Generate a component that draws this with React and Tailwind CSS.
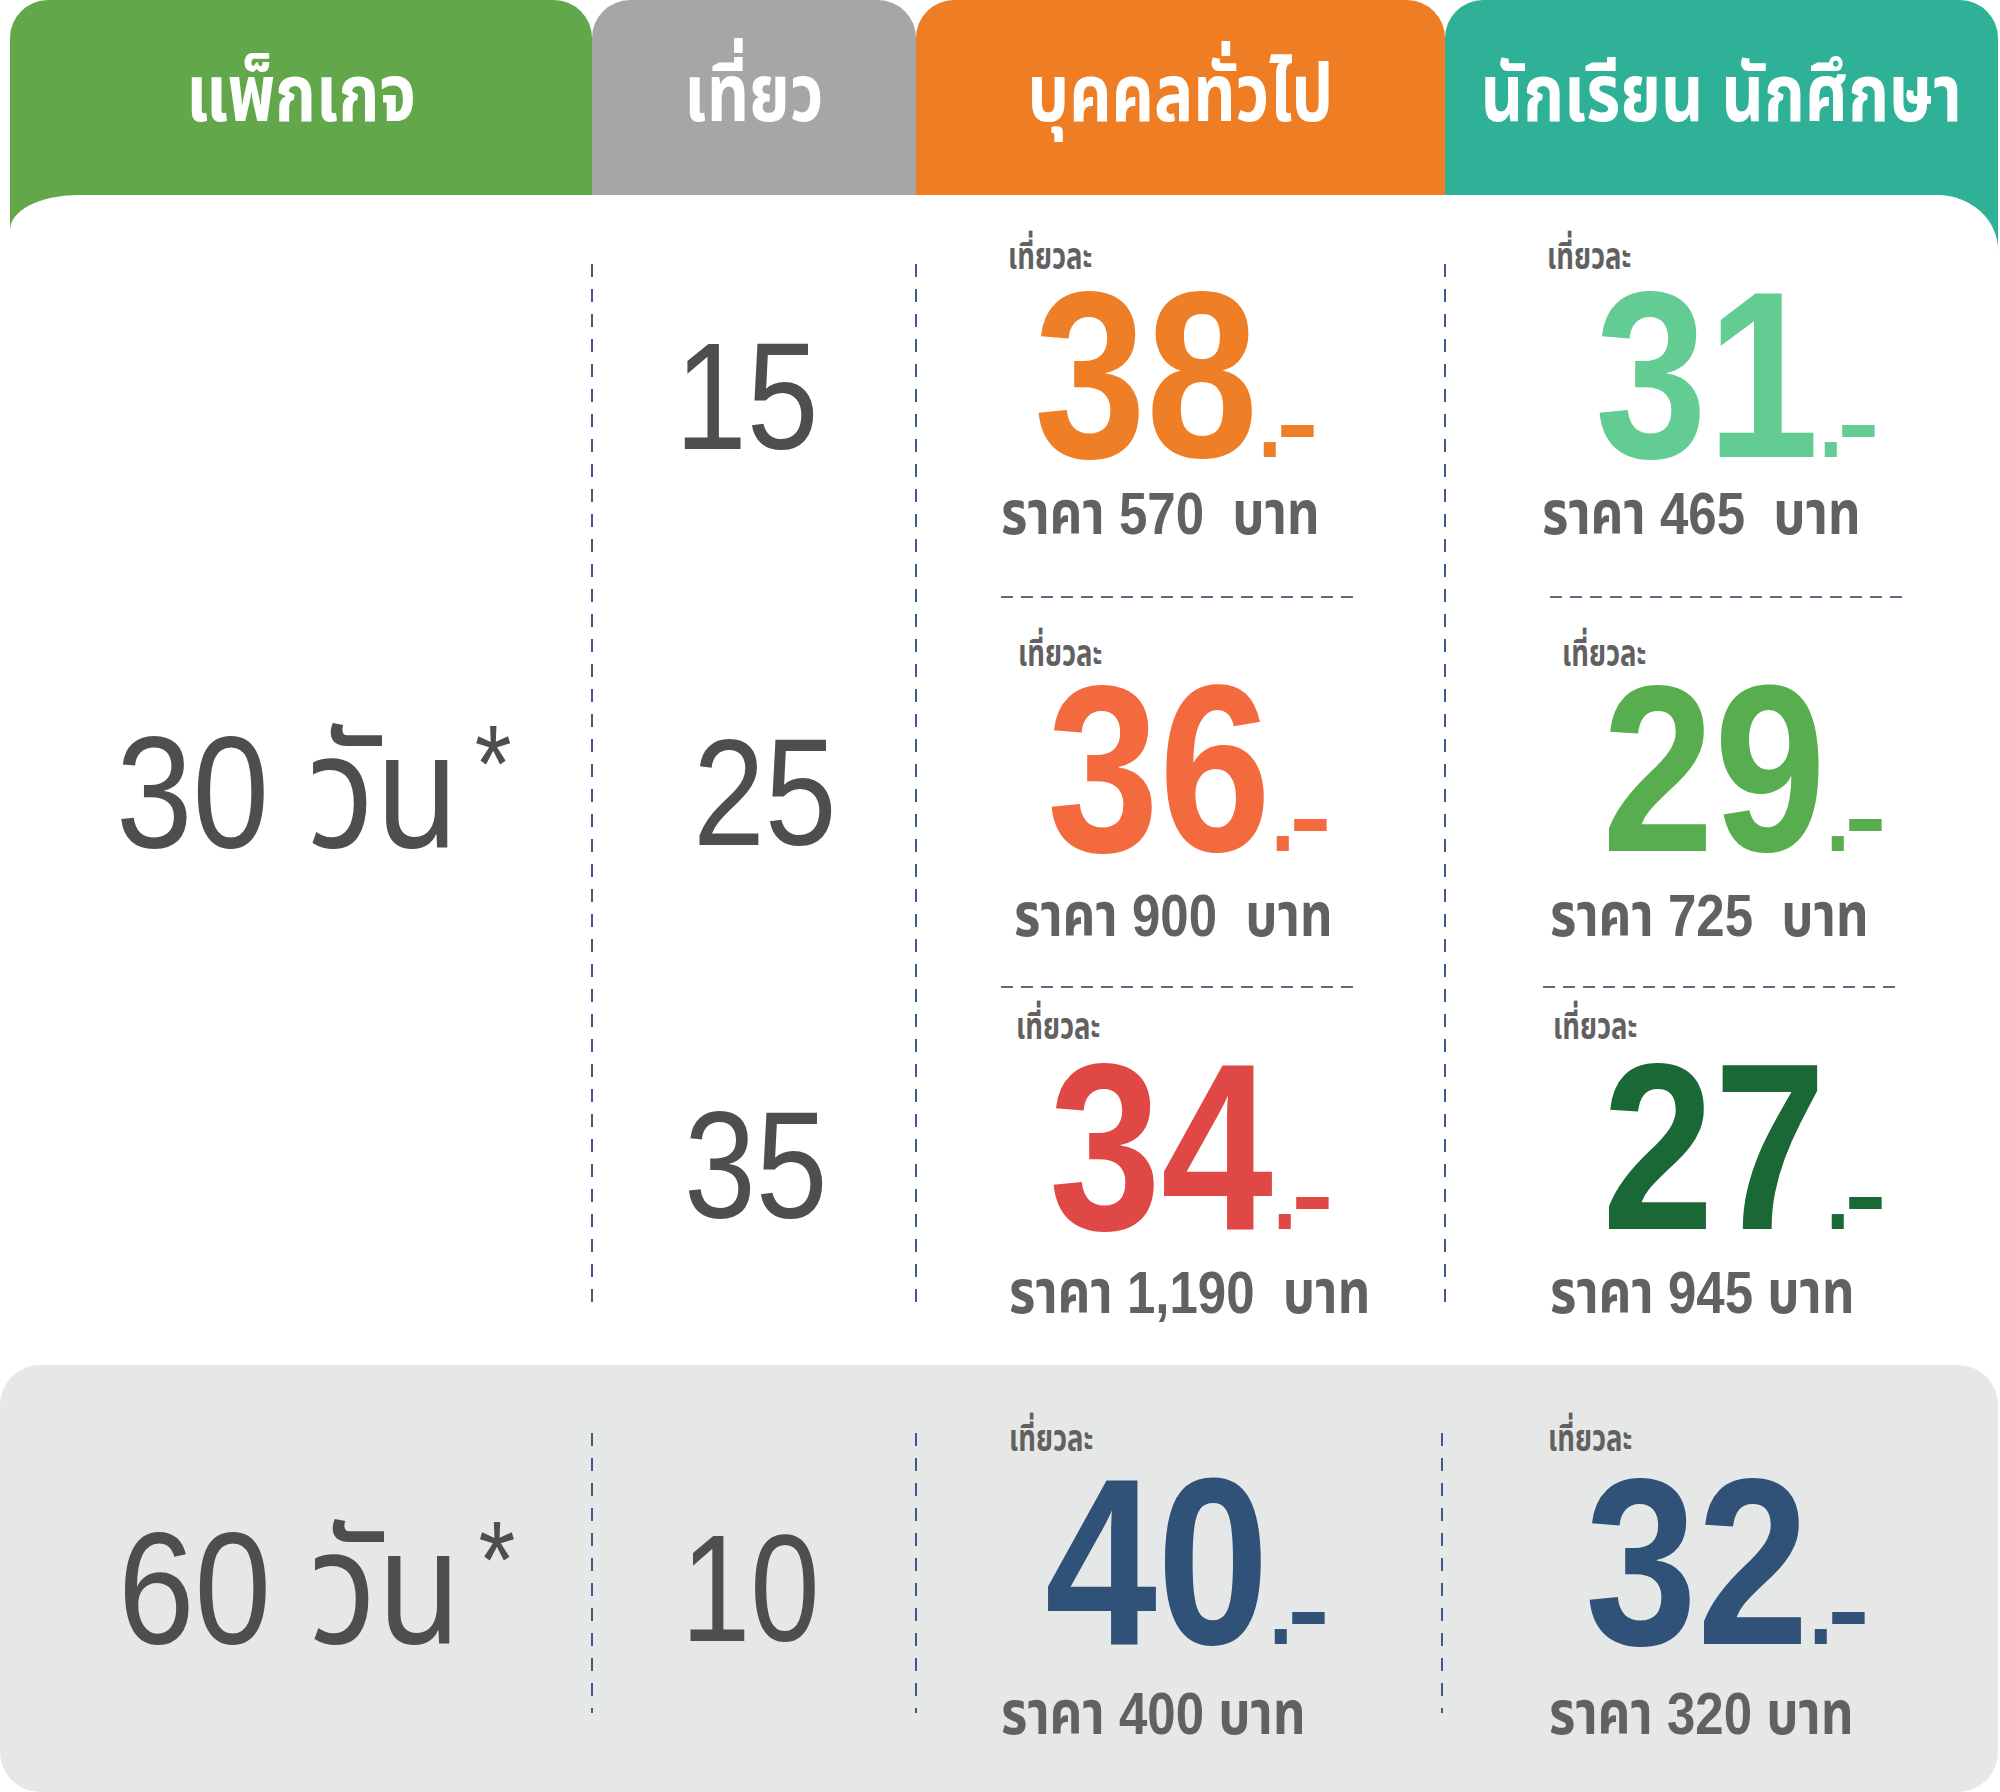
import React from "react";

const VDash = ({ cls }) => (
  <div
    className={`w-[2px] shrink-0 bg-[repeating-linear-gradient(to_bottom,#3d5a8a_0px,#3d5a8a_13px,transparent_13px,transparent_25px)] ${cls}`}
  />
);

const HDash = ({ cls }) => (
  <div
    className={`h-[2px] w-[354px] bg-[repeating-linear-gradient(to_right,#5a6a80_0px,#5a6a80_12px,transparent_12px,transparent_20px)] ${cls}`}
  />
);

function Cell({ h, labelCls, numCls, priceCls, color, num, price }) {
  return (
    <div className={`${h} flex flex-col items-start`}>
      <div
        className={`text-[37px] leading-[28px] font-bold text-[#616161] whitespace-nowrap origin-left scale-x-[0.74] ${labelCls}`}
      >
        เที่ยวละ
      </div>
      <div
        className={`text-[237px] leading-[178px] font-bold whitespace-nowrap origin-left scale-x-[0.85] ${color} ${numCls}`}
      >
        <span>{num}</span>
        <span className="text-[100px] leading-[50px]">.</span>
        <span className="inline-block text-[100px] leading-[50px] -ml-[6px] origin-left scale-x-[1.5]">-</span>
      </div>
      <div
        className={`text-[60px] leading-[45px] font-bold text-[#616161] whitespace-nowrap origin-left scale-x-[0.85] ${priceCls}`}
      >
        {price}
      </div>
    </div>
  );
}

function Tab({ cls, children }) {
  return (
    <div className={`shrink-0 rounded-t-[38px] flex justify-center pt-[64px] ${cls}`}>
      <div className="text-[80px] leading-[60px] font-bold text-white whitespace-nowrap scale-x-[0.82]">
        {children}
      </div>
    </div>
  );
}

export default function App() {
  return (
    <div className="w-[2000px] h-[1792px] bg-white overflow-hidden font-['Liberation_Sans','Noto_Sans_Thai','Noto_Sans',sans-serif]">
      {/* header tabs */}
      <div className="flex h-[260px] pl-[10px] pr-[2px]">
        <Tab cls="w-[582px] bg-[#62a84b]">แพ็กเกจ</Tab>
        <Tab cls="w-[324px] bg-[#a6a6a6]">เที่ยว</Tab>
        <Tab cls="w-[529px] bg-[#ee7d24]">บุคคลทั่วไป</Tab>
        <Tab cls="w-[553px] bg-[#2fb197]">นักเรียน นักศึกษา</Tab>
      </div>

      {/* white body */}
      <div className="relative -mt-[65px] ml-[10px] mr-[2px] h-[1170px] bg-white rounded-tl-[67px_35px] rounded-tr-[61px_55px] flex">
        {/* col 1 */}
        <div className="w-[581px] shrink-0 pt-[537px] pl-[106px]">
          <div className="text-[160px] leading-[120px] text-[#4d4f4f] whitespace-nowrap origin-left scale-x-[0.86]">
            30 วัน
            <span className="text-[110px] leading-[20px] ml-[18px] align-[46px]">*</span>
          </div>
        </div>
        <VDash cls="mt-[69px] h-[1043px]" />
        {/* col 2 */}
        <div className="w-[322px] shrink-0 flex flex-col">
          <div className="h-[401px] pt-[144px] pl-[82px]">
            <div className="text-[152px] leading-[114px] text-[#4d4f4f] origin-left scale-x-[0.85]">15</div>
          </div>
          <div className="h-[390px] pt-[139px] pl-[100px]">
            <div className="text-[152px] leading-[114px] text-[#4d4f4f] origin-left scale-x-[0.85]">25</div>
          </div>
          <div className="flex-1 pt-[122px] pl-[91px]">
            <div className="text-[152px] leading-[114px] text-[#4d4f4f] origin-left scale-x-[0.85]">35</div>
          </div>
        </div>
        <VDash cls="mt-[69px] h-[1043px]" />
        {/* col 3 */}
        <div className="w-[527px] shrink-0 flex flex-col">
          <Cell
            h="h-[401px]"
            labelCls="mt-[48px] ml-[91px]"
            numCls="mt-[15px] ml-[117px]"
            priceCls="mt-[27px] ml-[84px]"
            color="text-[#ef7f27]"
            num="38"
            price={"ราคา 570\u00a0\u00a0บาท"}
          />
          <HDash cls="ml-[84px]" />
          <Cell
            h="h-[388px]"
            labelCls="mt-[42px] ml-[101px]"
            numCls="mt-[12px] ml-[130px]"
            priceCls="mt-[35px] ml-[97px]"
            color="text-[#f26a3d]"
            num="36"
            price={"ราคา 900\u00a0\u00a0บาท"}
          />
          <HDash cls="ml-[84px]" />
          <Cell
            h="flex-1"
            labelCls="mt-[25px] ml-[99px]"
            numCls="mt-[17px] ml-[132px]"
            priceCls="mt-[34px] ml-[92px]"
            color="text-[#e04846]"
            num="34"
            price={"ราคา 1,190\u00a0\u00a0บาท"}
          />
        </div>
        <VDash cls="mt-[69px] h-[1043px]" />
        {/* col 4 */}
        <div className="flex-1 flex flex-col">
          <Cell
            h="h-[401px]"
            labelCls="mt-[48px] ml-[101px]"
            numCls="mt-[15px] ml-[149px]"
            priceCls="mt-[27px] ml-[96px]"
            color="text-[#62cc93]"
            num="31"
            price={"ราคา 465\u00a0\u00a0บาท"}
          />
          <HDash cls="ml-[104px]" />
          <Cell
            h="h-[388px]"
            labelCls="mt-[42px] ml-[116px]"
            numCls="mt-[12px] ml-[156px]"
            priceCls="mt-[35px] ml-[104px]"
            color="text-[#58ae4e]"
            num="29"
            price={"ราคา 725\u00a0\u00a0บาท"}
          />
          <HDash cls="ml-[97px]" />
          <Cell
            h="flex-1"
            labelCls="mt-[25px] ml-[107px]"
            numCls="mt-[17px] ml-[156px]"
            priceCls="mt-[34px] ml-[104px]"
            color="text-[#196836]"
            num="27"
            price={"ราคา 945 บาท"}
          />
        </div>
      </div>

      {/* gray 60 day section */}
      <div className="w-[1998px] h-[427px] bg-[#e6e8e7] rounded-[40px] flex">
        <div className="w-[591px] shrink-0 pt-[163px] pl-[118px]">
          <div className="text-[160px] leading-[120px] text-[#4d4f4f] whitespace-nowrap origin-left scale-x-[0.86]">
            60 วัน
            <span className="text-[110px] leading-[20px] ml-[20px] align-[46px]">*</span>
          </div>
        </div>
        <VDash cls="mt-[68px] h-[280px]" />
        <div className="w-[322px] shrink-0 pt-[166px] pl-[88px]">
          <div className="text-[152px] leading-[114px] text-[#4d4f4f] origin-left scale-x-[0.82]">10</div>
        </div>
        <VDash cls="mt-[68px] h-[280px]" />
        <div className="w-[524px] shrink-0">
          <Cell
            h="h-full"
            labelCls="mt-[60px] ml-[92px]"
            numCls="mt-[20px] ml-[128px]"
            priceCls="mt-[40px] ml-[84px]"
            color="text-[#305278]"
            num="40"
            price="ราคา 400 บาท"
          />
        </div>
        <VDash cls="mt-[68px] h-[280px]" />
        <div className="flex-1">
          <Cell
            h="h-full"
            labelCls="mt-[60px] ml-[105px]"
            numCls="mt-[20px] ml-[142px]"
            priceCls="mt-[40px] ml-[106px]"
            color="text-[#305278]"
            num="32"
            price="ราคา 320 บาท"
          />
        </div>
      </div>
    </div>
  );
}
